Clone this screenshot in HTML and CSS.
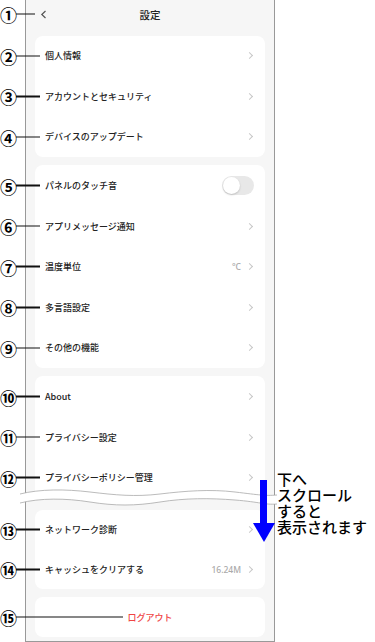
FILE: index.html
```html
<!DOCTYPE html>
<html lang="ja">
<head>
  <meta charset="utf-8" />
  <meta name="viewport" content="width=device-width, initial-scale=1" />
  <title>設定</title>
  <link rel="stylesheet" href="styles.css">
</head>
<body>
  <div class="page">
    <div class="phone">
      <!-- ① header -->
      <header class="nav">
        <span class="mark mark-nav"><span class="num">①</span><span class="lead"></span></span>
        <svg class="back" width="7" height="9" viewBox="0 0 7 9" aria-hidden="true"><path d="M5.5 1 L1.8 4.5 L5.5 8" fill="none" stroke="#555" stroke-width="1.2"/></svg>
        <h1>設定</h1>
        <span></span>
      </header>

      <!-- account -->
      <section class="card">
        <div class="row"><span class="mark"><span class="num">②</span><span class="lead"></span></span><span class="label">個人情報</span><i class="chev"></i></div>
        <div class="row"><span class="mark"><span class="num">③</span><span class="lead"></span></span><span class="label">アカウントとセキュリティ</span><i class="chev"></i></div>
        <div class="row"><span class="mark"><span class="num">④</span><span class="lead"></span></span><span class="label">デバイスのアップデート</span><i class="chev"></i></div>
      </section>

      <!-- app -->
      <section class="card">
        <div class="row"><span class="mark"><span class="num">⑤</span><span class="lead"></span></span><span class="label">パネルのタッチ音</span><span class="switch"></span></div>
        <div class="row"><span class="mark"><span class="num">⑥</span><span class="lead"></span></span><span class="label">アプリメッセージ通知</span><i class="chev"></i></div>
        <div class="row"><span class="mark"><span class="num">⑦</span><span class="lead"></span></span><span class="label">温度単位</span><span class="value">°C</span><i class="chev"></i></div>
        <div class="row"><span class="mark"><span class="num">⑧</span><span class="lead"></span></span><span class="label">多言語設定</span><i class="chev"></i></div>
        <div class="row"><span class="mark"><span class="num">⑨</span><span class="lead"></span></span><span class="label">その他の機能</span><i class="chev"></i></div>
      </section>

      <!-- about -->
      <section class="card">
        <div class="row"><span class="mark"><span class="num">⑩</span><span class="lead"></span></span><span class="label">About</span><i class="chev"></i></div>
        <div class="row"><span class="mark"><span class="num">⑪</span><span class="lead"></span></span><span class="label">プライバシー設定</span><i class="chev"></i></div>
        <div class="row"><span class="mark"><span class="num">⑫</span><span class="lead"></span></span><span class="label">プライバシーポリシー管理</span><i class="chev"></i></div>
      </section>

      <section class="card card-after-cut">
        <div class="row row-short"><span class="mark"><span class="num">⑬</span><span class="lead"></span></span><span class="label">ネットワーク診断</span><i class="chev"></i></div>
        <div class="row row-short"><span class="mark"><span class="num">⑭</span><span class="lead"></span></span><span class="label">キャッシュをクリアする</span><span class="value">16.24M</span><i class="chev"></i></div>
      </section>

      <section class="card card-logout">
        <div class="row row-logout"><span class="mark mark-logout"><span class="num">⑮</span><span class="lead"></span></span><span class="logout">ログアウト</span></div>
      </section>
    </div>

    <!-- scroll break -->
    <svg class="cut" width="257" height="22" viewBox="0 0 257 22" aria-hidden="true">
      <path d="M0 7 C20 2 45 2 70 5 S115 10 140 7 S190 2 215 5 S245 9 257 8 L257 17 C245 18 230 14 215 13 S165 11 140 15 S90 19 70 15 S20 11 0 16 Z" fill="#fff"/>
      <path d="M0 7 C20 2 45 2 70 5 S115 10 140 7 S190 2 215 5 S245 9 257 8" fill="none" stroke="#aaa" stroke-width="0.8"/>
      <path d="M0 16 C20 11 45 11 70 15 S115 19 140 15 S190 11 215 13 S245 18 257 17" fill="none" stroke="#aaa" stroke-width="0.8"/>
    </svg>

    <svg class="arrow" width="24" height="63" viewBox="0 0 24 63" aria-hidden="true">
      <rect x="8" y="0" width="7" height="44" fill="#0000ff"/>
      <polygon points="1,43 23,43 12,62" fill="#0000ff"/>
    </svg>
    <p class="note"><span>下へ</span><span>スクロール</span><span>すると</span><span>表示されます</span></p>
  </div>
</body>
</html>
```

FILE: styles.css
```css
*,*::before,*::after{box-sizing:border-box;margin:0;padding:0;}

body{
  background:#fff;
  font-family:"Noto Sans CJK JP","Noto Sans",sans-serif;
  color:#333;
}

.page{
  position:relative;
  width:375px;
  height:642px;
  overflow:hidden;
}

/* phone frame */
.phone{
  margin-left:25px;
  width:250px;
  height:642px;
  padding:0 9px;
  background:#f6f6f6;
  border:1px solid #999;
  border-top:none;
}

.nav{
  position:relative;
  height:28px;
  margin:0 -9px 7.5px;
  display:grid;
  grid-template-columns:1fr auto 1fr;
  align-items:center;
}
.nav .back{margin-left:14px;}
.nav h1{
  font-size:10.5px;
  font-weight:500;
  color:#222;
}

/* cards */
.card{
  background:#fff;
  border-radius:8px;
  margin-bottom:8px;
}
.card-after-cut{margin-top:12px;}

.row{
  position:relative;
  height:40.6px;
  display:flex;
  align-items:center;
  padding:0 12px 0 10px;
  font-size:9px;
  font-weight:500;
}
.row-short{height:39.5px;}
.row-logout{height:40px;justify-content:center;padding:0;}

.label{flex:1;color:#222;}
.value{color:#aaa;font-size:8.5px;margin-right:6px;font-family:"Noto Sans","Noto Sans CJK JP",sans-serif;}

.chev{
  width:5px;
  height:5px;
  border-top:1px solid #c8c8c8;
  border-right:1px solid #c8c8c8;
  transform:rotate(45deg);
  margin-right:1px;
}

.switch{
  position:relative;
  width:32px;
  height:19px;
  border-radius:10px;
  background:#e8e8e8;
  margin-right:-1px;
}
.switch::after{
  content:"";
  position:absolute;
  top:1px;
  left:1px;
  width:17px;
  height:17px;
  border-radius:50%;
  background:#fff;
  box-shadow:0 1px 2px rgba(0,0,0,.18);
}

.logout{
  color:#f04545;
  font-size:9px;
  font-weight:500;
}

/* annotation marks */
.mark{
  position:absolute;
  left:-35px;
  top:50%;
  transform:translateY(-50%);
  width:40px;
  display:flex;
  align-items:center;
}
.mark-nav{left:-26px;width:35px;}
.mark-logout{width:123px;}
.num{
  font-size:17px;
  line-height:17px;
  color:#000;
  font-weight:700;
  width:16px;
  margin-left:0;
  letter-spacing:-1px;
}
.lead{
  flex:1;
  height:1.6px;
  background:#111;
}

/* overlays */
.cut{
  position:absolute;
  left:20px;
  top:487px;
}
.arrow{
  position:absolute;
  left:252px;
  top:480px;
}
.note{
  position:absolute;
  left:277px;
  top:471px;
  display:flex;
  flex-direction:column;
  font-size:15px;
  line-height:16px;
  font-weight:500;
  color:#000;
  white-space:nowrap;
}
```
